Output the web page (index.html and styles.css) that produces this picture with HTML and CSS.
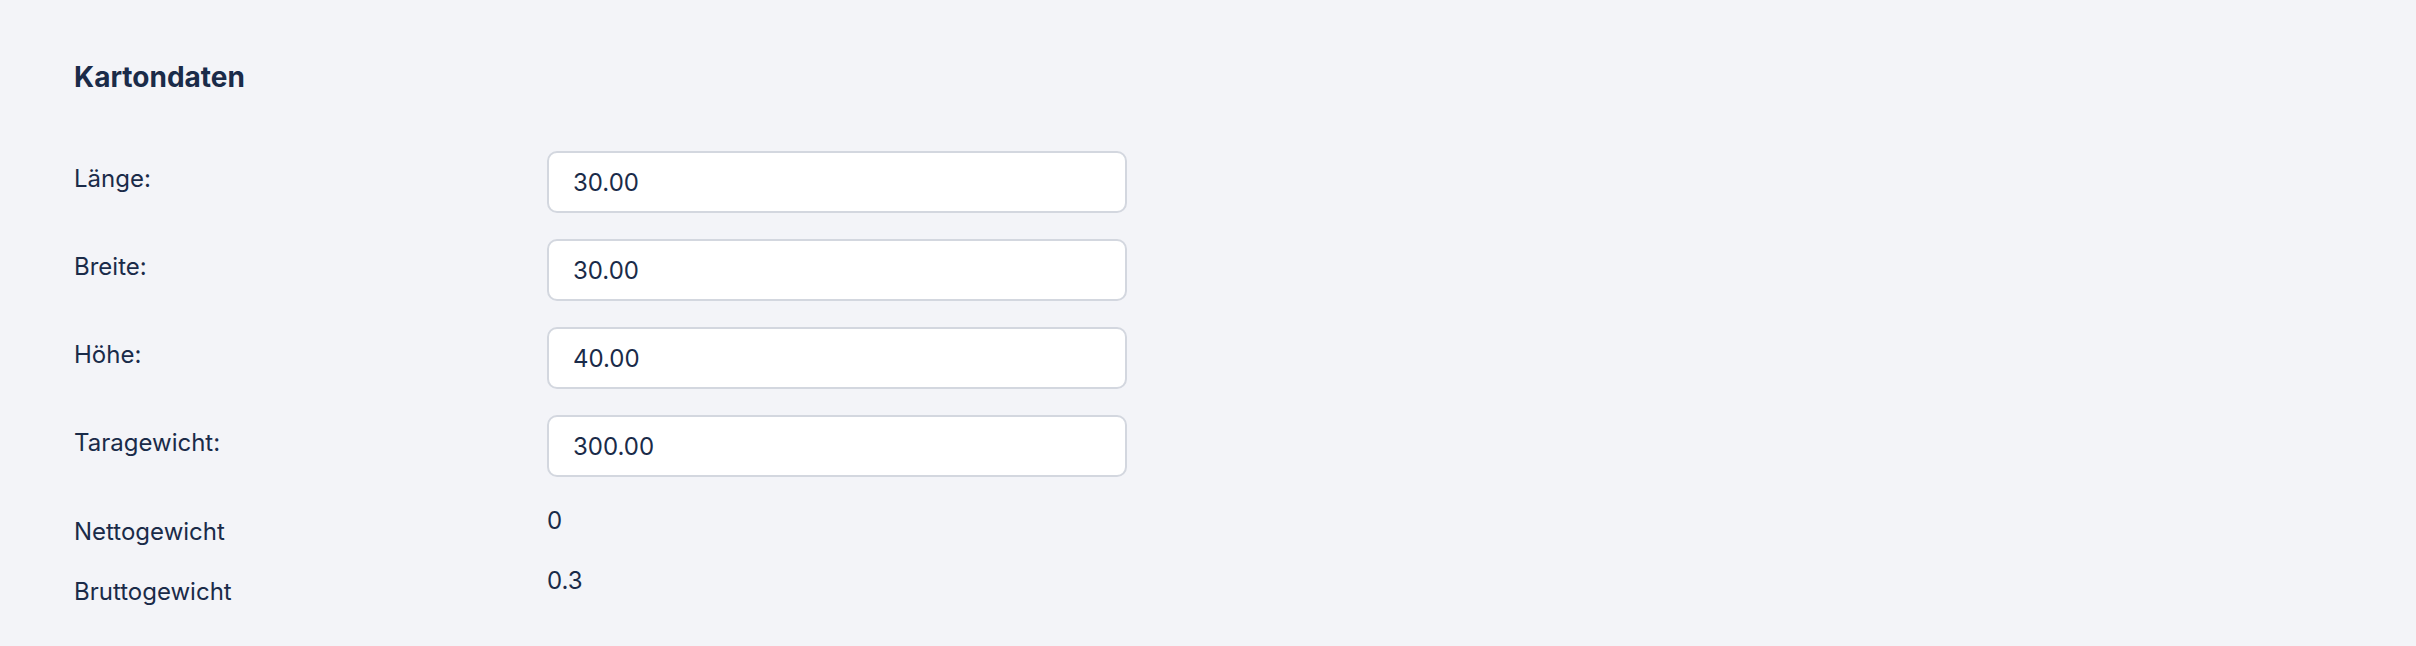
FILE: index.html
```html
<!DOCTYPE html>
<html lang="de">

<head>
    <meta charset="UTF-8">
    <meta name="viewport" content="width=device-width, initial-scale=1.0">
    <title>Kartondaten</title>
    <link rel="stylesheet" href="styles.css">
</head>

<body>
    <div class="page">
        <h2 class="section-title">Kartondaten</h2>

        <div class="form">
            <div class="form-row">
                <label class="form-label" for="laenge">Länge:</label>
                <input class="form-input" id="laenge" type="text" value="30.00">
            </div>
            <div class="form-row">
                <label class="form-label" for="breite">Breite:</label>
                <input class="form-input" id="breite" type="text" value="30.00">
            </div>
            <div class="form-row">
                <label class="form-label" for="hoehe">Höhe:</label>
                <input class="form-input" id="hoehe" type="text" value="40.00">
            </div>
            <div class="form-row">
                <label class="form-label" for="tara">Taragewicht:</label>
                <input class="form-input" id="tara" type="text" value="300.00">
            </div>

            <div class="form-row static-row">
                <span class="form-label">Nettogewicht</span>
                <span class="form-value">0</span>
            </div>
            <div class="form-row static-row">
                <span class="form-label">Bruttogewicht</span>
                <span class="form-value">0.3</span>
            </div>
        </div>
    </div>
</body>

</html>
```

FILE: styles.css
```css
* {
    margin: 0;
    padding: 0;
    box-sizing: border-box;
}

body,
html {
    height: 100%;
    overflow: hidden;
    background: #f3f4f8;
    font-family: 'Inter', 'Liberation Sans', sans-serif;
    color: #1a2b49;
}

.page {
    padding: 56px 74px 0;
}

.section-title {
    font-size: 28px;
    line-height: 42px;
    font-weight: 700;
    color: #1a2b49;
}

.form {
    display: flex;
    flex-direction: column;
    margin-top: 53px;
}

.form-row {
    display: grid;
    grid-template-columns: 473px 580px;
    align-items: start;
    margin-bottom: 26px;
}

.form-label {
    font-size: 24px;
    line-height: 36px;
    padding-top: 10px;
}

.form-input {
    width: 100%;
    height: 62px;
    padding: 0 24px;
    border: 2px solid #d3d7df;
    border-radius: 10px;
    background: #fff;
    font-family: inherit;
    font-size: 24px;
    color: #1a2b49;
    outline: none;
}

.static-row {
    margin-bottom: 13px;
}

.static-row .form-label {
    padding-top: 11px;
}

.form-value {
    font-size: 24px;
    line-height: 36px;
}
```
